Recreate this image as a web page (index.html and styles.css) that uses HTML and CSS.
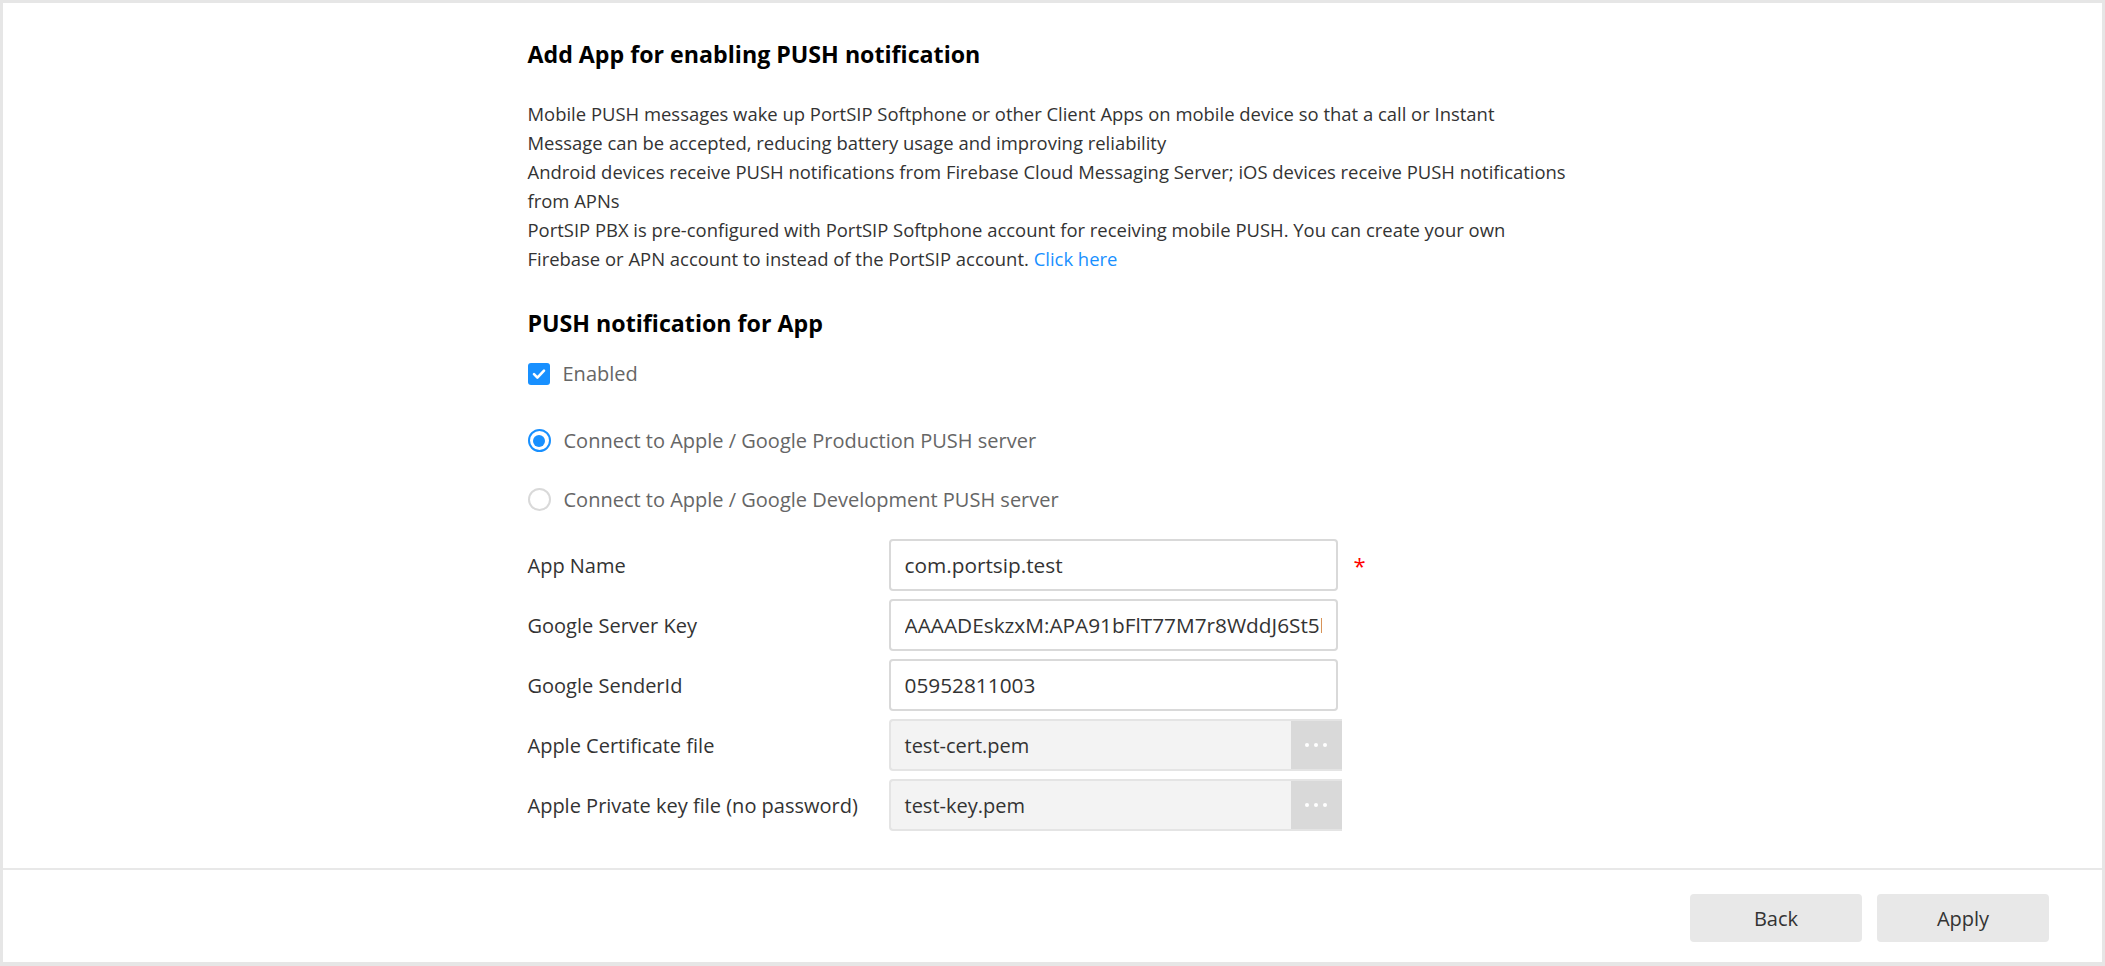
FILE: index.html
```html
<!DOCTYPE html>
<html lang="en">
<head>
<meta charset="utf-8">
<title>Add App for enabling PUSH notification</title>
<link rel="stylesheet" href="styles.css">
</head>
<body>
<div class="panel">
  <main class="content">
    <h2 class="title">Add App for enabling PUSH notification</h2>
    <div class="desc">
      <p>Mobile PUSH messages wake up PortSIP Softphone or other Client Apps on mobile device so that a call or Instant<br>Message can be accepted, reducing battery usage and improving reliability</p>
      <p>Android devices receive PUSH notifications from Firebase Cloud Messaging Server; iOS devices receive PUSH notifications from APNs</p>
      <p>PortSIP PBX is pre-configured with PortSIP Softphone account for receiving mobile PUSH. You can create your own Firebase or APN account to instead of the PortSIP account. <a class="link" href="#">Click here</a></p>
    </div>
    <h2 class="subtitle">PUSH notification for App</h2>
    <label class="check-row">
      <span class="checkbox"><svg viewBox="0 0 22 22" width="22" height="22"><path d="M6 11.2l3.4 3.4 6.6-7" fill="none" stroke="#fff" stroke-width="2.6" stroke-linecap="round" stroke-linejoin="round"/></svg></span>
      <span class="opt-label">Enabled</span>
    </label>
    <div class="radios">
      <label class="radio-row">
        <span class="radio checked"></span>
        <span class="opt-label">Connect to Apple / Google Production PUSH server</span>
      </label>
      <label class="radio-row">
        <span class="radio"></span>
        <span class="opt-label">Connect to Apple / Google Development PUSH server</span>
      </label>
    </div>
    <div class="form">
      <div class="row">
        <span class="label">App Name</span>
        <div class="input"><span class="val">com.portsip.test</span></div>
        <span class="req">*</span>
      </div>
      <div class="row">
        <span class="label">Google Server Key</span>
        <div class="input"><span class="val">AAAADEskzxM:APA91bFlT77M7r8WddJ6St5hYt</span></div>
      </div>
      <div class="row">
        <span class="label">Google SenderId</span>
        <div class="input"><span class="val">05952811003</span></div>
      </div>
      <div class="row">
        <span class="label">Apple Certificate file</span>
        <div class="file">
          <span class="file-name">test-cert.pem</span>
          <span class="file-btn"><i></i><i></i><i></i></span>
        </div>
      </div>
      <div class="row">
        <span class="label">Apple Private key file (no password)</span>
        <div class="file">
          <span class="file-name">test-key.pem</span>
          <span class="file-btn"><i></i><i></i><i></i></span>
        </div>
      </div>
    </div>
  </main>
  <footer class="footer">
    <button class="btn">Back</button>
    <button class="btn">Apply</button>
  </footer>
</div>
</body>
</html>
```

FILE: styles.css
```css
html, body {
  margin: 0;
  padding: 0;
  height: 100%;
}
body {
  background: #e6e6e6;
  font-family: "Open Sans", "Noto Sans", sans-serif;
  font-size: 20px;
  color: #333;
  box-sizing: border-box;
  padding: 3px 3px 4px 3px;
}
.panel {
  background: #fff;
  height: 100%;
  display: flex;
  flex-direction: column;
}
.content {
  flex: 1;
  width: 1050px;
  margin: 0 auto;
  padding-top: 36px;
}
.title, .subtitle {
  margin: 0;
  font-size: 23.2px;
  font-weight: 700;
  line-height: 30px;
  color: #000;
}
.desc {
  margin-top: 30px;
  font-size: 18.45px;
  line-height: 29px;
}
.desc p {
  margin: 0;
}
.link {
  color: #1890ff;
  text-decoration: none;
}
.subtitle {
  margin-top: 35px;
}
.check-row, .radio-row {
  display: flex;
  align-items: center;
  gap: 13px;
  line-height: 29px;
}
.check-row {
  margin-top: 21px;
}
.checkbox {
  width: 22px;
  height: 22px;
  border-radius: 3px;
  background: #1890ff;
  display: flex;
}
.opt-label {
  color: #666;
}
.radios {
  margin-top: 38px;
  display: flex;
  flex-direction: column;
  gap: 30px;
}
.radio {
  width: 23px;
  height: 23px;
  box-sizing: border-box;
  border-radius: 50%;
  border: 2px solid #d9d9d9;
  display: flex;
  align-items: center;
  justify-content: center;
}
.radio.checked {
  border: 2px solid #1890ff;
}
.radio.checked::after {
  content: "";
  width: 12px;
  height: 12px;
  border-radius: 50%;
  background: #1890ff;
}
.form {
  margin-top: 25px;
  display: flex;
  flex-direction: column;
  gap: 8px;
}
.row {
  display: flex;
  align-items: center;
}
.label {
  width: 361px;
  flex: none;
}
.input, .file {
  box-sizing: border-box;
  height: 52px;
  border: 2px solid #d9d9d9;
  border-radius: 4px;
  display: flex;
  align-items: center;
  white-space: nowrap;
}
.input {
  width: 449px;
  padding: 0 14px;
  font-size: 20.8px;
}
.val {
  display: block;
  flex: 1;
  overflow: hidden;
}
.file {
  width: 453px;
  background: #f3f3f3;
  border-color: #e4e4e4;
  border-right: none;
  border-radius: 4px 0 0 4px;
  overflow: hidden;
}
.file-name {
  flex: 1;
  padding: 0 14px;
}
.file-btn {
  width: 51px;
  height: 100%;
  background: #d9d9d9;
  display: flex;
  align-items: center;
  justify-content: center;
  gap: 5px;
}
.file-btn i {
  width: 4px;
  height: 4px;
  border-radius: 50%;
  background: #fff;
}
.req {
  color: #f00;
  margin-left: 16px;
  font-size: 22px;
}
.footer {
  height: 94px;
  box-sizing: border-box;
  border-top: 2px solid #e8e8e8;
  display: flex;
  align-items: flex-start;
  justify-content: flex-end;
  gap: 15px;
  padding: 24px 53px 0 0;
}
.btn {
  width: 172px;
  height: 48px;
  border: none;
  border-radius: 4px;
  background: #e8e8e8;
  color: #333;
  font-family: inherit;
  font-size: 20px;
}
```
